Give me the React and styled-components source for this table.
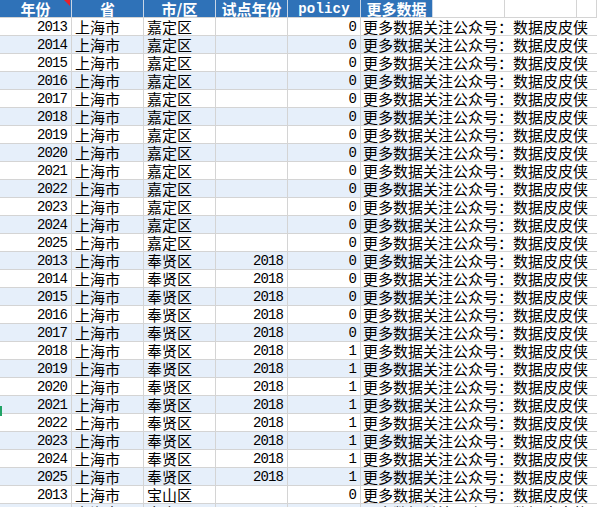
import React from 'react';
import styled, { createGlobalStyle, css } from 'styled-components';

const GlobalStyle = createGlobalStyle`
  html, body {
    margin: 0;
    padding: 0;
    background: #ffffff;
    overflow: hidden;
  }
  body {
    font-family: "Noto Sans CJK SC", "Noto Sans", sans-serif;
  }
`

const Sheet = styled.div`
  width: 597px;
  height: 507px;
  overflow: hidden;
  position: relative;
`

const cols = '72px 72px 72px 72px 73px 72px 72px 72px 1fr';

const HeadRow = styled.div`
  display: grid;
  grid-template-columns: ${cols};
  height: 18px;
  box-sizing: border-box;
  border-bottom: 1px solid #d4d4d4;
`

const HeadCell = styled.div`
  position: relative;
  box-sizing: border-box;
  height: 17px;
  line-height: 18px;
  text-align: center;
  font-size: 15px;
  font-weight: bold;
  color: #ffffff;
  background: #2f72b8;
  border-right: 1px solid #c9d6e6;
  white-space: nowrap;
  overflow: hidden;
  ${props => props.mono && css`
    font-family: "Liberation Mono", "DejaVu Sans Mono", monospace;
    font-size: 14px;
    letter-spacing: 0.2px;
  `}
  ${props => props.empty && css`
    background: #ffffff;
    border-right: 1px solid #d4d4d4;
  `}
`

const Comment = styled.span`
  position: absolute;
  top: 0;
  right: 1px;
  width: 0;
  height: 0;
  border-top: 6px solid #e8202a;
  border-left: 6px solid transparent;
`

const Row = styled.div`
  display: grid;
  grid-template-columns: 72px 72px 72px 72px 73px 72px 1fr;
  height: 18px;
  box-sizing: border-box;
  border-bottom: 1px solid #d4d4d4;
`

const Cell = styled.div`
  box-sizing: border-box;
  height: 17px;
  line-height: 17px;
  font-size: 15px;
  color: #000000;
  padding: 0 3px;
  white-space: nowrap;
  background: ${props => (props.band ? '#e6effa' : '#ffffff')};
  border-right: 1px solid #d4d4d4;
  text-align: ${props => (props.num ? 'right' : 'left')};
  ${props => props.num && css`
    font-family: "Liberation Mono", "DejaVu Sans Mono", monospace;
    font-size: 14px;
    line-height: 18px;
    letter-spacing: -0.9px;
    padding-right: 4px;
  `}
  ${props => props.spill && css`
    border-right: none;
    overflow: visible;
    position: relative;
    z-index: 1;
    padding-left: 2px;
  `}
`

const Rest = styled.div`
  height: 17px;
  background: #ffffff;
`

const Mark = styled.span`
  position: absolute;
  left: 0;
  top: 406px;
  width: 2px;
  height: 10px;
  background: #21a366;
`

const buildRows = () => {
  const rows = [];
  for (let y = 2013; y <= 2025; y++) {
    rows.push({ year: y, prov: '上海市', city: '嘉定区', pilot: '', policy: 0 });
  }
  for (let y = 2013; y <= 2025; y++) {
    rows.push({ year: y, prov: '上海市', city: '奉贤区', pilot: '2018', policy: y >= 2018 ? 1 : 0 });
  }
  for (let y = 2013; y <= 2015; y++) {
    rows.push({ year: y, prov: '上海市', city: '宝山区', pilot: '', policy: 0 });
  }
  return rows;
};

const rows = buildRows();
const more = '更多数据关注公众号：数据皮皮侠';

const App = () => (
  <Sheet>
    <GlobalStyle />
    <HeadRow>
      <HeadCell>年份<Comment /></HeadCell>
      <HeadCell>省</HeadCell>
      <HeadCell>市/区</HeadCell>
      <HeadCell>试点年份</HeadCell>
      <HeadCell mono>policy</HeadCell>
      <HeadCell>更多数据</HeadCell>
      <HeadCell empty />
      <HeadCell empty />
      <HeadCell empty />
    </HeadRow>
    {rows.map((r, i) => {
      const band = i % 2 === 1;
      return (
        <Row key={i}>
          <Cell num band={band}>{r.year}</Cell>
          <Cell band={band}>{r.prov}</Cell>
          <Cell band={band}>{r.city}</Cell>
          <Cell num band={band}>{r.pilot}</Cell>
          <Cell num band={band}>{r.policy}</Cell>
          <Cell spill band={band}>{more}</Cell>
          <Rest />
        </Row>
      );
    })}
    <Mark />
  </Sheet>
);

export default App;
